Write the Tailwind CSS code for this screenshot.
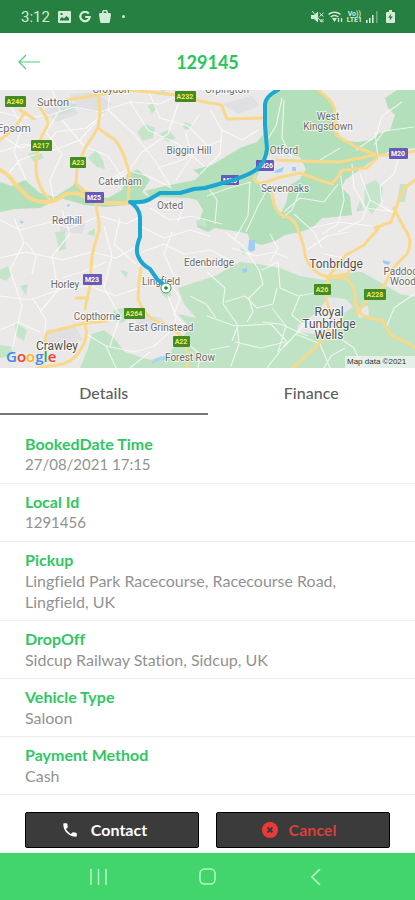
<!DOCTYPE html>
<html lang="en">
<head>
    <meta charset="UTF-8">
    <meta name="viewport" content="width=device-width, initial-scale=1.0">
    <title>Booking 129145</title>
    <script src="https://cdn.jsdelivr.net/npm/@tailwindcss/browser@4"></script>
</head>
<body class="bg-white font-['Lato',sans-serif] [font-variant-ligatures:none]">
    <div class="min-h-screen flex flex-col">
        <!-- Status bar -->
        <div class="h-[33px] bg-[#258041] text-[#d3ecd6] flex items-center justify-between pl-[21px] pr-5">
            <div class="flex items-center gap-2">
                <span class="font-['Roboto',sans-serif] text-[15px] leading-5">3:12</span>
                <svg class="w-[13px] h-3" viewBox="0 0 13 12" fill="currentColor"><path fill-rule="evenodd" d="M1 0h11a1 1 0 0 1 1 1v10a1 1 0 0 1-1 1H1a1 1 0 0 1-1-1V1a1 1 0 0 1 1-1ZM2 9.500h9V7L8.500 5 6 7.500 4 6 2 8ZM2.500 2v2h2V2Z"/></svg>
                <svg class="w-3 h-3" viewBox="0 0 12 12" fill="none" stroke="currentColor" stroke-width="2.200"><path d="M9.800 2.700A4.700 4.700 0 1 0 10.700 6H6.200"/></svg>
                <svg class="w-3 h-[13px]" viewBox="0 0 12 13" fill="currentColor"><path d="M.5 3h11l.5 2-1.200 7a1 1 0 0 1-1 1H2.200a1 1 0 0 1-1-1L0 5Z"/><path d="M3.800 4V2.600a2.200 2.200 0 0 1 4.400 0V4" fill="none" stroke="currentColor" stroke-width="1.600"/></svg>
                <span class="ml-[3px] size-[3px] rounded-full bg-current"></span>
            </div>
            <div class="flex items-center gap-1">
                <svg class="w-[13px] h-3" viewBox="0 0 13 12" fill="currentColor"><path d="M0 4h3l4-3.500v11L3 8H0Z"/><path d="m1 0 10 11.500M8.500 2l4 3.500M12.500 2l-4 3.500M9.500 8l3 3M12.500 8l-3 3" stroke="currentColor"/></svg>
                <svg class="w-[15px] h-3" viewBox="0 0 15 12" fill="none" stroke="currentColor" stroke-width="1.400"><path d="M.5 3.500a9 9 0 0 1 12 0M2.700 6a5.500 5.500 0 0 1 7.600 0"/><path d="m4 7 2.500 4L9 7Z" fill="currentColor" stroke="none"/><path d="M10.500 7v4M13.500 7v4" stroke-width="1.300"/></svg>
                <span class="font-['Roboto',sans-serif] font-bold text-[7px] leading-[6px] text-center">Vo))<br>LTE1</span>
                <svg class="w-3 h-3" viewBox="0 0 12 12" fill="currentColor"><path d="M0 9h1.600v3H0zM3 7h1.600v5H3zM6 4h1.600v8H6z"/><path d="M10 0h1.600v12H10z" opacity=".4"/></svg>
                <svg class="w-[9px] h-[13px] ml-1" viewBox="0 0 9 13"><path d="M3 0h3v2h2a1 1 0 0 1 1 1v9a1 1 0 0 1-1 1H1a1 1 0 0 1-1-1V3a1 1 0 0 1 1-1h2Z" fill="currentColor"/><path d="m5.200 3.500-3 4.300h2l-.6 3 3.200-4.300H4.700Z" fill="#258041"/></svg>
            </div>
        </div>

        <!-- Header -->
        <header class="h-[57px] grid grid-cols-[1fr_auto_1fr] items-center px-[18px]">
            <button aria-label="Back" class="text-[#4fce78] justify-self-start cursor-pointer">
                <svg class="w-[22px] h-4" viewBox="0 0 22 16" fill="none" stroke="currentColor" stroke-width="1.200"><path d="M22 8H1M8 1 1 8l7 7"/></svg>
            </button>
            <h1 class="text-[18px] leading-6 font-bold text-[#27c65a]">129145</h1>
        </header>

        <!-- Route map -->
        <svg class="block w-full h-[278px]" viewBox="0 0 415 278" preserveAspectRatio="xMidYMid slice" role="img" aria-label="Route map">
            <rect width="415" height="278" fill="#ebe9e8"/>
            <g fill="#b3dfba">
                <path d="M278 0H320L333 15 337 42 345 51 358 52 372 50 378 44 390 40 395 25 388 18 385 8 397 0H415V58L388 62 376 68 362 78 345 90 342 98 350 106 352 125 335 127 322 128 312 138 300 142 285 145 275 151 262 155 250 152 248 144 240 142 215 138 208 142 197 137 203 120 197 110 188 108 150 107 145 101 165 96 195 90 200 85 193 80 212 75 240 58 257 52 263 45 264 15Z"/>
                <path d="M0 92 12 96 25 90 40 103 55 107 72 96 76 92 90 104 108 108 122 100 128 82 138 80 150 90 142 102 150 108 140 113 128 115 105 117 85 115 60 108 40 118 15 119 0 122Z"/>
            </g>
            <path fill="#c0e3c5" d="M178 198 190 194 215 186 240 172 258 174 280 178 300 186 325 190 350 182 362 182 385 195 400 204 415 207V278H80L88 258 92 244 104 240 114 248 125 262 150 270 168 264 180 250 190 238 178 224 196 228 184 214Z"/>
            <g fill="#c5e5ca">
                <path d="m137 42 8-8 10 4-2 10-10 3ZM148 16l5-4 4 6-5 6ZM58 16l10-4 10 3-8 8-12 2ZM88 68l8-8 7 10 2 9-8-2ZM28 64l12-4 4 8-10 4ZM158 44l10-4 8 8-8 4ZM185 32l8 3-4 6-6-3ZM55 142l10-1 1 18-7 2ZM0 180l8-4 4 8-6 7-6-3ZM20 196l8-2-2 12ZM15 232l12 8-3 11-8-5ZM114 220l10-2 6 9-8 6-10-3ZM120 180l8 2-2 6ZM86 144l9-6v8ZM196 130h9l2 7-10-2ZM365 95l10-5 8 8-2 14-9 12-8-9ZM400 94h8l-3 18h-8ZM360 110l-4 12 8-2ZM0 255l14 2-3 9-11 2ZM240 158l8 3-5 4ZM160 202l8-3 4 6-5 4ZM155 4l9-4 3 6Z"/>
            </g>
            <!-- towns -->
            <g fill="#e8e7e8">
                <path d="m266 66 14-5 20 6 6 12-6 10-10 6-4 18-5 10-8-8-3-12-8-4-6-10Z"/>
                <path d="m298 235 20-13 10-15 18 2 7 8-12 8-6 16-20 3-18-2Z"/>
                <path d="m356 218 12-2 1 10-10 2Z"/>
                <path d="m300 178 12-8 40-4 8 15-20 5-18-5-20 5Z"/>
            </g>
            <g fill="#d9dadf" opacity=".6">
                <path d="m70 4 24-2 18 12-8 10-26-5ZM222 14l30-8 8 10-22 8ZM44 20l28-8 6 12-22 8ZM45 240l30-4 8 14-24 9-16-8ZM134 225l28 2 6 12-28 2ZM60 128l26 4-4 12-22-2Z"/>
            </g>
            <path d="M249 150h6v10l-4 2-3-2ZM258 77l6-1 1 4-6 1ZM276 80l8-3-2 5-8 1ZM292 77h4v4h-4ZM242 179l5-1v4l-4 1ZM20 130l4 2-3 2ZM66 115l4-1-1 3ZM383 170l8 2-3 3-5-2Z" fill="#9fcdf5"/>
            <path d="m152 273 6-4 8-1" stroke="#a9d4f4" stroke-width="3" fill="none"/>
            <!-- minor roads -->
            <g fill="none" stroke="#fff" stroke-width="1.200" opacity=".7" stroke-linejoin="round">
                <path d="m0 22 22 6 28-3 24-8 26 5 30-10 30 2 24-12M0 62l24-8 30 6 26-10 16-18M52 0l8 20-14 22 16 22-12 26 4 22M110 0l-2 20 26 24 22 28 14 24M130 12l18 28 30 14 26 22M148 0l12 28 28 8 20 20M0 44l20 14 18-6M62 30l22 26 24 10 16 24M104 24l-18 14-30 4-14 20-22 8-14 16M178 14l-10 30-26 18-14 20-22 12M200 24l-14 20 6 22-16 24M158 78l24-8 20-12 20-8M8 12l14 24-8 26 12 28M210 20l12 20-2 24-20 20M222 40l20 10 16-10M106 92l20-12 22 6 24 12"/>
                <path d="m0 130 20 10 30-8 20 6 30-12 26 8 16-8M14 128l10 24-14 28 12 36-10 44M62 120l8 24-18 22 6 34-18 22M0 168l26-6 36 8 30-8 24 6 22-12M0 206l30 4 34-12 26-2 26 10 22-8M104 136l8 30-8 32 16 28-10 30M120 128l-6 26 22 20M140 136l24 12 26-8 20 6M142 162l22-8 20 10 26-4 20 10M172 196l8 12-6 16 14 16M0 240l18-8 22 10M34 210l12 20-2 22M86 244l20 12 28 6 20-6 18-16M62 188l20-6 24-10M172 142l-8 22 10 22M26 152l10 14-4 18M150 118l20 12 22-4 30 8M184 112l-6 20M190 206l16 8 10 14M168 206l8 20-2 14"/>
                <path d="m282 8-6 28-10 16M284 10l-2 38 10 20M320 70l20-12M374 55l10-14 30-4M250 92l-2 34-14 24M268 98l-10 18-12 26M284 122l16-14 24 4 14-18M294 124l20 18 8 16M340 80l4 30-6 24-16 10M207 96l10 14-2 24M207 106l22-8 22-6M356 60l20-14 6-20 20-14M352 74l2 24 12 20 30 4M370 110l-8 20-24 12M400 64l-6 20-14 12 2 20M310 138l28-6 34 4M300 100l-8 20-10 8M378 68l-3-26M360 84l10 26 26 14M307 160l20-14 22-4M324 164l20 4 12-10"/>
                <path d="m225 142 18 14 16 24 4 14-14 14 4 14-6 10M207 182l18 16-2 16 14 20 2 20-8 22M262 180l16-8 2 26 18 8 34-6M225 212l20-6 12 12 16-4 4-16M207 226l28 10 36-2 16 18-20 26M272 218l14 18-8 26M300 205l-8 20 12 10-20 22M238 235l-6 16M334 244l20 14 8 20M345 258l-14 8-8 14M386 238l8-20 20-14M232 158l24 8 18-4 14 6M262 232l18 2 28 12M296 244l24 10 10 24M285 252l-24 6-26-6M150 262l-20 16M176 244l24 20-2 14M106 256l10 22M210 260l20-4M270 172l8-14-8-14"/>
            </g>
            <!-- main roads -->
            <g fill="none" stroke="#f8d88a" stroke-width="3" stroke-linecap="round" stroke-linejoin="round">
                <path d="M0 80q10 5 14 13l9 9q8 10 22 10 10 1 19-7 10-4 18 0 10 7 24 8h24" stroke-width="4"/>
                <path d="M98 0l2 22-2 16-13 20-8 20-1 15q4 8 15 10l5 12 3 17v8l-7 25-2 30-5 24"/>
                <path d="M85 233q4 14-4 26-8 14-24 16l-20 3M45 252q-2-9 9-11l31-8 22-2M76 208h12M98 38l17 12q8 10 11 22l4 13-2 27"/>
                <path d="M40 18q12 14 5 22-8 12-9 35 0 24 16 36M20 20l14 9M0 50l15-12 10-16"/>
                <path d="m66 10 32-5 30-5 32 3 15 2 34 8q14 0 14 6l4 10 35-1M141 178q-3 15-3 31 6 16 18 22 22 8 28 20 4 10 3 27"/>
                <path d="M318 0q18 12 17 25l1 20 20 12 20 8h18l21-4M277 70l23 1 40 1 35-7M255 86q-3 7 8 7l18-6 19-4 22 8 10 3 11-14 24-2 10-10"/>
                <path d="m272 102 2 12q4 10 10 12 10 1 14 14 6 14 7 25 6 18 23 22l18 1q9 8 9 20 0 16 14 20l14 3 8 14 24 12"/>
                <path d="m328 187 18-22 18-10 14-16M375 138l16-6 8-22 6-12 10-8M394 118l10 20q10 12 3 26l-14 14-9 18-16 13-11 14M328 187l-2 22q6 16 4 28-8 18-38 41M328 187l20-3 4-9"/>
            </g>
            <!-- place names -->
            <g font-family="Roboto, sans-serif" font-size="10" fill="#6b6b6b" stroke="#fff" stroke-width="2" stroke-opacity=".7" paint-order="stroke" text-anchor="middle">
                <text x="111" y="3">Croydon</text>
                <text x="227" y="3">Orpington</text>
                <g font-size="11">
                    <text x="53" y="16">Sutton</text>
                    <text x="14" y="42">Epsom</text>
                </g>
                <text x="189" y="64">Biggin Hill</text>
                <text x="328" y="30">West</text>
                <text x="328" y="40">Kingsdown</text>
                <text x="284" y="64">Otford</text>
                <text x="120" y="95">Caterham</text>
                <text x="170" y="119">Oxted</text>
                <text x="285" y="102">Sevenoaks</text>
                <text x="67" y="134">Redhill</text>
                <text x="209" y="176">Edenbridge</text>
                <text x="65" y="198">Horley</text>
                <text x="161" y="195">Lingfield</text>
                <text x="97" y="230">Copthorne</text>
                <text x="161" y="241">East Grinstead</text>
                <text x="190" y="271">Forest Row</text>
                <text x="403" y="185">Paddock</text>
                <text x="403" y="195">Wood</text>
                <g font-size="12" fill="#505050">
                    <text x="57" y="260">Crawley</text>
                    <text x="336" y="178">Tonbridge</text>
                    <text x="329" y="226">Royal</text>
                    <text x="329" y="238">Tunbridge</text>
                    <text x="329" y="249">Wells</text>
                </g>
            </g>
            <!-- road shields -->
            <g fill="#458b24">
                <rect x="5" y="6" width="21" height="11" rx="1"/>
                <rect x="175" y="1" width="21" height="11" rx="1"/>
                <rect x="31" y="50" width="21" height="11" rx="1"/>
                <rect x="70" y="67" width="16" height="11" rx="1"/>
                <rect x="124" y="218" width="21" height="11" rx="1"/>
                <rect x="173" y="246" width="17" height="11" rx="1"/>
                <rect x="314" y="194" width="17" height="11" rx="1"/>
                <rect x="364" y="199" width="22" height="11" rx="1"/>
            </g>
            <g fill="#655bb8">
                <rect x="85" y="102" width="19" height="11" rx="1"/>
                <rect x="83" y="184" width="19" height="11" rx="1"/>
                <rect x="221" y="85" width="18" height="10" rx="1"/>
                <rect x="256" y="70" width="18" height="11" rx="1"/>
                <rect x="389" y="58" width="19" height="11" rx="1"/>
            </g>
            <g font-family="Roboto, sans-serif" font-size="7" font-weight="bold" text-anchor="middle">
                <g fill="#e8ec63">
                    <text x="15" y="14">A240</text>
                    <text x="185" y="9">A232</text>
                    <text x="41" y="58">A217</text>
                    <text x="78" y="75">A23</text>
                    <text x="134" y="226">A264</text>
                    <text x="181" y="254">A22</text>
                    <text x="322" y="202">A26</text>
                    <text x="375" y="207">A228</text>
                </g>
                <g fill="#fff">
                    <text x="94" y="110">M25</text>
                    <text x="92" y="192">M23</text>
                    <text x="230" y="93">M25</text>
                    <text x="266" y="78">M26</text>
                    <text x="398" y="66">M20</text>
                </g>
            </g>
            <!-- booked route -->
            <path d="M278 0q-12 6-13 14v21l2 24q-2 14-9 19-6 6-28 13l-25 7-11 1-14 4-20 0-10 6q-6 4-20 3 9 5 10 15v20q-5 12-2 19 3 8 12 13l7 10 8 7" fill="none" stroke="#1ba7d2" stroke-width="4" stroke-linejoin="round" stroke-linecap="round"/>
            <circle cx="166" cy="198" r="5" fill="#fff" stroke="#4a9e55" stroke-width="1"/>
            <circle cx="166" cy="198" r="1.800" fill="#17862b"/>
            <text x="6" y="272" font-family="Open Sans, sans-serif" font-size="15" font-weight="600"><tspan fill="#4285f4">G</tspan><tspan fill="#ea4335">o</tspan><tspan fill="#fbbc05">o</tspan><tspan fill="#4285f4">g</tspan><tspan fill="#34a853">l</tspan><tspan fill="#ea4335">e</tspan></text>
            <rect x="345" y="266" width="70" height="12" fill="#f2f4f1" opacity=".75"/>
            <text x="347" y="274" font-family="Liberation Sans, sans-serif" font-size="8" fill="#333">Map data ©2021</text>
        </svg>

        <!-- Tabs -->
        <div role="tablist" class="grid grid-cols-2 h-[47px] text-base leading-5 font-medium text-[#5f5f5f]">
            <button role="tab" aria-selected="true" class="border-b-2 border-[#777] pt-1 cursor-pointer">Details</button>
            <button role="tab" aria-selected="false" class="border-b-2 border-transparent pt-1 cursor-pointer">Finance</button>
        </div>

        <!-- Booking details -->
        <dl class="text-base leading-[21px] text-[#929292]">
            <div class="px-[25px] pt-[18px] pb-2 border-b border-[#ececec]">
                <dt class="font-bold text-[#30c763]">BookedDate Time</dt>
                <dd class="text-[15px]">27/08/2021 17:15</dd>
            </div>
            <div class="px-[25px] pt-[7px] pb-2 border-b border-[#ececec]">
                <dt class="font-bold text-[#30c763]">Local Id</dt>
                <dd class="text-[15px]">1291456</dd>
            </div>
            <div class="px-[25px] pt-[7px] pb-2 border-b border-[#ececec]">
                <dt class="font-bold text-[#30c763]">Pickup</dt>
                <dd class="max-w-[330px]">Lingfield Park Racecourse, Racecourse Road, Lingfield, UK</dd>
            </div>
            <div class="px-[25px] pt-[7px] pb-2 border-b border-[#ececec]">
                <dt class="font-bold text-[#30c763]">DropOff</dt>
                <dd>Sidcup Railway Station, Sidcup, UK</dd>
            </div>
            <div class="px-[25px] pt-[7px] pb-2 border-b border-[#ececec]">
                <dt class="font-bold text-[#30c763]">Vehicle Type</dt>
                <dd>Saloon</dd>
            </div>
            <div class="px-[25px] pt-[7px] pb-2 border-b border-[#ececec]">
                <dt class="font-bold text-[#30c763]">Payment Method</dt>
                <dd>Cash</dd>
            </div>
        </dl>

        <!-- Actions -->
        <div class="grid grid-cols-2 gap-[17px] px-[25px] pt-[17px] pb-[5px] text-base leading-5 font-bold">
            <button class="h-9 flex items-center justify-center gap-3 bg-[#3b3b3b] border border-black rounded-xs text-white pr-4 cursor-pointer">
                <svg class="size-[18px]" viewBox="0 0 24 24" fill="currentColor"><path d="M6.620 10.790c1.440 2.830 3.760 5.140 6.590 6.590l2.200-2.200c.27-.27.67-.36 1.020-.24 1.120.37 2.330.57 3.570.57.55 0 1 .45 1 1V20c0 .55-.45 1-1 1C10.610 21 3 13.390 3 4c0-.55.45-1 1-1h3.500c.55 0 1 .45 1 1 0 1.250.2 2.450.57 3.570.11.35.03.74-.25 1.020z"/></svg>
                Contact
            </button>
            <button class="h-9 flex items-center justify-center gap-[11px] bg-[#3b3b3b] border border-black rounded-xs text-[#d8413c] pr-2 cursor-pointer">
                <svg class="size-4" viewBox="0 0 16 16"><circle cx="8" cy="8" r="8" fill="#ee3a36"/><path d="m5.500 5.500 5 5m0-5-5 5" stroke="#3b3b3b" stroke-width="2"/></svg>
                Cancel
            </button>
        </div>

        <!-- System navigation -->
        <nav class="mt-auto h-[47px] bg-[#41d56c] text-[#b9f5c9] flex items-center justify-center gap-[92px]">
            <button aria-label="Recent apps" class="cursor-pointer">
                <svg class="w-[17px] h-4" viewBox="0 0 17 16" stroke="currentColor" stroke-width="1.500"><path d="M1 0v16M8.500 0v16M16 0v16"/></svg>
            </button>
            <button aria-label="Home" class="cursor-pointer">
                <svg class="size-[17px]" viewBox="0 0 17 17" fill="none" stroke="currentColor" stroke-width="1.500"><rect x="1" y="1" width="15" height="15" rx="4.500"/></svg>
            </button>
            <button aria-label="Back" class="cursor-pointer">
                <svg class="w-[17px] h-4" viewBox="0 0 17 16" fill="none" stroke="currentColor" stroke-width="1.700"><path d="m12 0-8 8 8 8"/></svg>
            </button>
        </nav>
    </div>
</body>
</html>
